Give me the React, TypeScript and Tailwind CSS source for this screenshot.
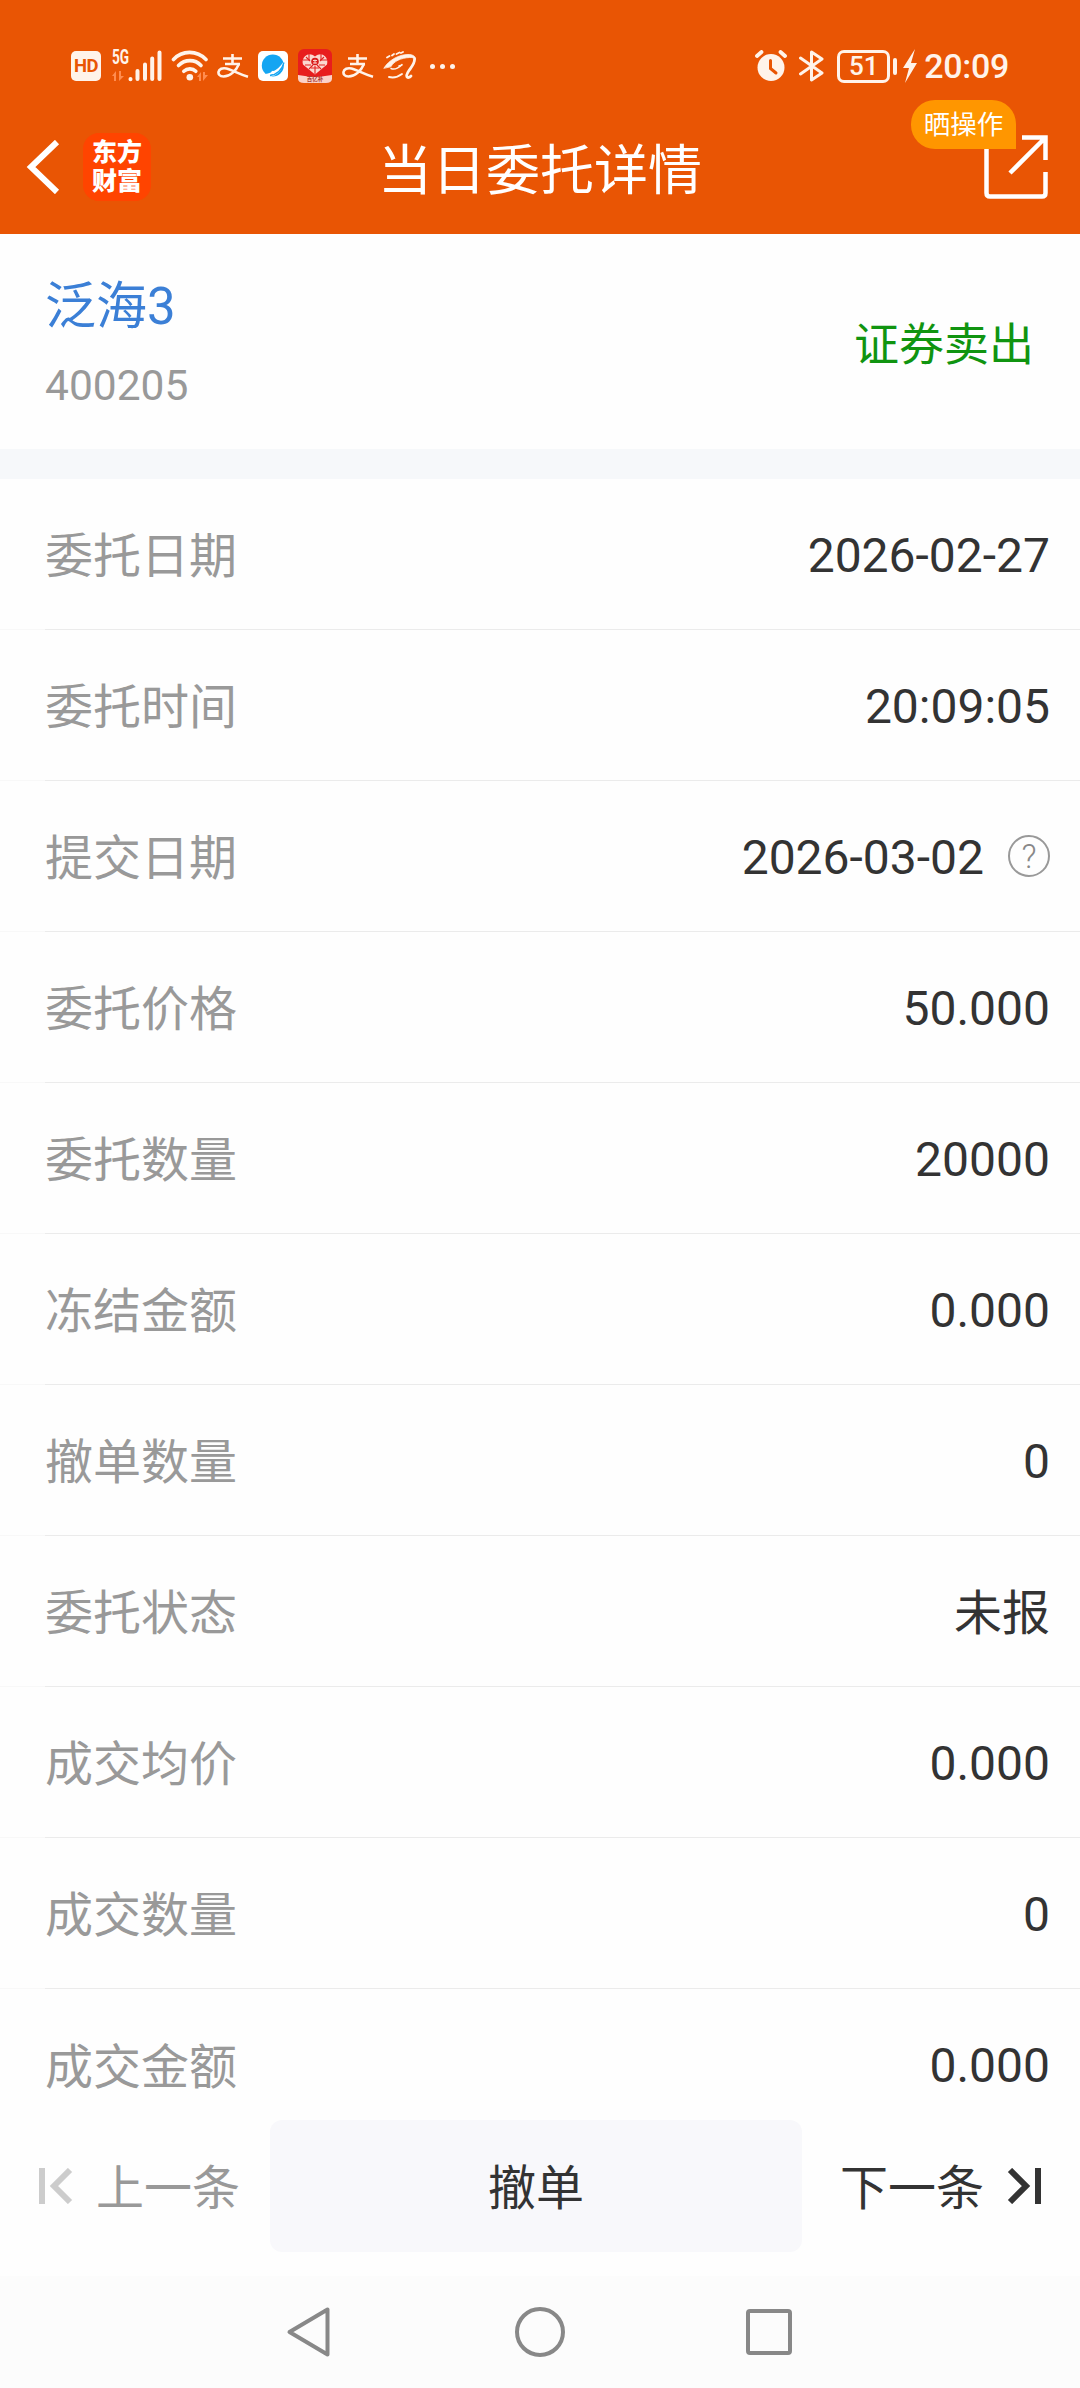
import React from 'react';
import { clsx } from 'clsx';

type Row = { label: string; value: string; help?: boolean };

const ROWS: Row[] = [
  { label: '委托日期', value: '2026-02-27' },
  { label: '委托时间', value: '20:09:05' },
  { label: '提交日期', value: '2026-03-02', help: true },
  { label: '委托价格', value: '50.000' },
  { label: '委托数量', value: '20000' },
  { label: '冻结金额', value: '0.000' },
  { label: '撤单数量', value: '0' },
  { label: '委托状态', value: '未报' },
  { label: '成交均价', value: '0.000' },
  { label: '成交数量', value: '0' },
  { label: '成交金额', value: '0.000' },
];

function AlipayIcon({ className }: { className?: string }) {
  return (
    <svg className={clsx('w-8 h-7 shrink-0', className)} viewBox="0 0 32 28" fill="none" stroke="#fff3ea" strokeWidth="2.6">
      <path d="M15.5 2v10M6 6.500h19M8 12h15" />
      <path d="M22 12c-3 7-9 12.500-15.500 12.500C2.500 24.500 1.200 22 1.500 20 2 17 5.500 15.500 9.500 16.500c6 1.500 12 5.500 21.500 8.200" />
    </svg>
  );
}

function SignalIcon() {
  return (
    <div className="relative w-[51px] h-8 ml-[11px] shrink-0">
      <span className="absolute left-0 top-0 text-[20px] leading-[15px] font-bold origin-left scale-x-[0.68]">5G</span>
      <svg className="absolute inset-0" width="51" height="32" viewBox="0 0 51 32">
        <path d="M0 26l4-5v10H2v-5zM7 21v10l5-5H9v-5z" fill="#ff8d50" />
        <g stroke="#fff3ea" strokeWidth="4" strokeLinecap="round">
          <path d="M18.500 29v0.200M25.500 21v8M33 14.500v14.500M40.200 8.500v20.500M47.500 2.500v26.500" />
        </g>
      </svg>
    </div>
  );
}

function WifiIcon() {
  return (
    <svg className="ml-2 shrink-0" width="38" height="32" viewBox="0 0 38 32" fill="none">
      <g stroke="#fff3ea" strokeWidth="3.600" strokeLinecap="round">
        <path d="M2.500 9.500C11 0 26 0 35 9.500" />
        <path d="M7.500 15.500c6.500-6.500 16.500-6.500 22.500 0" />
        <path d="M12.800 21.300c3.500-3.300 8.800-3.300 12 0" />
      </g>
      <circle cx="18.800" cy="27.300" r="3.300" fill="#fff3ea" />
      <path d="M26 27l4-5v9h-2v-4zM32 22v9l5-6h-3v-3z" fill="#ff8d50" />
    </svg>
  );
}

function BrowserIcon() {
  return (
    <svg className="ml-[9px] shrink-0" width="30" height="30" viewBox="0 0 30 30">
      <rect width="30" height="30" rx="5" fill="#fff" />
      <circle cx="14.800" cy="14.500" r="11" fill="#14a5f2" />
      <path d="M7 23c8-1 15-6 19-13-1 8-6 15-15 16z" fill="#fff" />
      <path d="M12 24.500c7-1 12-6 14-13" stroke="#14a5f2" strokeWidth="1.300" fill="none" />
      <circle cx="15" cy="21.500" r="1.800" fill="#fff" />
    </svg>
  );
}

// red shopping app with the lattice heart
function HeartAppIcon() {
  return (
    <svg className="ml-2.5 shrink-0" width="34" height="34" viewBox="0 0 34 34">
      <rect width="34" height="34" rx="6" fill="#e81d1d" />
      <path d="M17 25.500L5 15.500c-2-7 5-14 12-8 7-6 14 1 12 8z" fill="#fbd8d0" />
      <g stroke="#e32222" strokeWidth="1.100" fill="none">
        <path d="M5 11h7M22 11h7M7 16h6M21 16h6M11 5v6M23 5v6M13 19h8M17 17v8" />
        <path d="M8 8l4 4M26 8l-4 4M11 20l4-4M23 20l-4-4" />
      </g>
      <circle cx="17" cy="12.500" r="3.800" fill="#d91c1c" />
      <path d="M15 11.500h4M15 14h4M17 10.500v4" stroke="#fbd0c8" strokeWidth="1" />
      <path d="M0 26l7 1q10 2 20 0l7-1v4q-.5 4-6 4H6q-5.500 0-6-4z" fill="#fcd2c8" />
      <text x="17" y="32.300" textAnchor="middle" fontSize="5.500" fontWeight="700" fill="#a83a30">百亿补</text>
    </svg>
  );
}

function TaobaoIcon() {
  return (
    <svg className="ml-[9px] shrink-0" width="34" height="30" viewBox="0 0 34 30" fill="none" stroke="#fff3ea" strokeLinecap="round">
      <path d="M1 17C6 9 16 3.500 25 3.500c5 0 8 2 7.500 5-1-1.500-3-2.200-6-2C18 7 11 10 8 15.500z" fill="#fff3ea" strokeWidth="0.800" />
      <path d="M4 6.500l2.500-1.500M9 4.500l2-1.500M13.500 3l3-1.500M18 2l2-1" strokeWidth="1.800" />
      <path d="M31.500 8c.5 4-3 8-5.500 11.500-2 3-3 5-2 6.500.7 1 2.500.5 4-1" strokeWidth="2.800" />
      <path d="M8 17.500c4 2 9-1.500 11-4M16 15l3-1" strokeWidth="1.500" />
      <path d="M6 26c4 1 9 0 13-3" strokeWidth="1.900" />
    </svg>
  );
}

function StatusBar() {
  return (
    <div className="flex items-center h-[132px] pl-[71px] text-[#fff3ea]">
      <div className="w-[30px] h-[30px] shrink-0 rounded-[5px] bg-[#fff3ea] flex items-center justify-center">
        <span className="text-[18.5px] leading-none font-bold text-[#e95504] tracking-tight">HD</span>
      </div>
      <SignalIcon />
      <WifiIcon />
      <AlipayIcon className="ml-2" />
      <BrowserIcon />
      <HeartAppIcon />
      <AlipayIcon className="ml-2.5" />
      <TaobaoIcon />
      <div className="flex gap-[5px] ml-[13px]">
        <i className="w-[5px] h-[5px] rounded-full bg-[#fff3ea]" />
        <i className="w-[5px] h-[5px] rounded-full bg-[#fff3ea]" />
        <i className="w-[5px] h-[5px] rounded-full bg-[#fff3ea]" />
      </div>

      <div className="ml-auto mr-[71px] flex items-center">
        <svg width="32" height="32" viewBox="0 0 32 32" fill="none" stroke="#fff3ea" strokeLinecap="round">
          <circle cx="16" cy="17.500" r="13.500" fill="#fff3ea" stroke="none" />
          <path d="M2 6l4.500-4M30 6l-4.500-4" strokeWidth="3.800" />
          <path d="M15.500 10.500v8l5.500 4.500" stroke="#e95504" strokeWidth="3" />
        </svg>
        <svg className="ml-3" width="25" height="32" viewBox="0 0 25 32" fill="none" stroke="#fff3ea" strokeWidth="3" strokeLinejoin="round" strokeLinecap="round">
          <path d="M1.500 8L23 23 12.500 30V2L23 9 1.500 24" />
        </svg>
        <div className="ml-[13px] w-[53px] h-[33px] border-[3px] border-[#fff3ea] rounded-[7px] flex items-center justify-center text-[26px] leading-none font-medium">
          51
        </div>
        <i className="ml-[3px] w-1 h-[17px] rounded-sm bg-[#fff3ea]" />
        <svg className="ml-1.5" width="14" height="34" viewBox="0 0 14 34" fill="#fff3ea">
          <path d="M12 0L0 19h6L2 34l12-20H8z" />
        </svg>
        <span className="ml-[7px] text-[34px] leading-none font-medium tracking-[-0.3px]">20:09</span>
      </div>
    </div>
  );
}

function Header() {
  return (
    <header className="h-[234px] bg-[#e95504] text-white">
      <StatusBar />
      <div className="relative h-[70px] flex items-center">
        <svg className="ml-[26px]" width="34" height="54" viewBox="0 0 34 54" fill="none" stroke="#fff" strokeWidth="6">
          <path d="M31 2L5 27l26 25" />
        </svg>
        <div className="ml-[23px] w-[68px] h-[68px] rounded-2xl bg-[#ff4400] flex items-center justify-center text-center text-[25px] leading-[29px] font-black">
          东方
          <br />
          财富
        </div>
        <h1 className="absolute inset-x-0 top-[3px] text-center text-[54px] leading-[74px]">当日委托详情</h1>
        <div className="relative ml-auto mr-8 w-[64px] h-[64px]">
          <svg width="64" height="64" viewBox="0 0 64 64" fill="none" stroke="#fff" strokeWidth="4.500">
            <path d="M2.500 4v54q0 3.500 3.500 3.500h52q3.500 0 3.500-3.500V37" />
            <path d="M38 2.500h23.500V25M61 3L26 38" />
          </svg>
          <span className="absolute -left-[73px] -top-[35px] w-[105px] h-[49px] rounded-[24px] rounded-br-none bg-[#ff9600] text-center text-[26.5px] leading-[50px]">
            晒操作
          </span>
        </div>
      </div>
    </header>
  );
}

function DetailRow({ row, last }: { row: Row; last: boolean }) {
  // hanzi sit a little higher than digits in the line box
  const isText = /[\u4e00-\u9fa5]/.test(row.value);

  return (
    <div className="h-[151px] flex">
      <div className={clsx('w-[45px] shrink-0', !last && 'border-b border-[#f8f8f8]')} />
      <div className={clsx('flex-1 pr-[30px] flex items-center justify-between', !last && 'border-b border-[#ebebeb]')}>
        <span className="pt-1.5 text-[#999999]">{row.label}</span>
        <span className="flex items-center text-[#333333]">
          <span className={isText ? 'pt-1.5' : 'pt-[3px]'}>{row.value}</span>
          {row.help && (
            <span className="ml-6 w-[42px] h-[42px] rounded-full border-2 border-[#999999] flex items-center justify-center text-[33px] leading-none font-light text-[#888888]">
              ?
            </span>
          )}
        </span>
      </div>
    </div>
  );
}

export default function App() {
  return (
    <div className="w-[1080px] h-[2388px] overflow-hidden flex flex-col bg-[#fefefe] text-[48px] font-[Roboto,'Noto_Sans_CJK_SC',sans-serif]">
      <Header />

      <section className="h-[215px] pl-[45px] pr-[46px] flex justify-between items-center shrink-0">
        <div className="flex flex-col pt-2.5">
          <span className="text-[51px] leading-[72px] text-[#3b7fd6]">泛海3</span>
          <span className="mt-[7px] text-[42.5px] leading-[72px] text-[#999999]">400205</span>
        </div>
        <span className="pt-2 text-[45px] text-[#109410]">证券卖出</span>
      </section>
      <div className="h-[30px] bg-[#f6f8fa] shrink-0" />

      <main className="h-[1641px] shrink-0 overflow-hidden">
        {ROWS.map((row, i) => (
          <DetailRow key={row.label} row={row} last={i === ROWS.length - 1} />
        ))}
      </main>

      <footer className="h-[156px] flex items-start shrink-0">
        <button className="w-[270px] h-[132px] pl-[39px] flex items-center text-[#999999]">
          <svg width="34" height="36" viewBox="0 0 34 36" fill="none" stroke="#cccccc" strokeWidth="6">
            <path d="M3 0v36M31 2L15 18l16 16" />
          </svg>
          <span className="ml-[23px] pt-1.5">上一条</span>
        </button>
        <button className="w-[532px] h-[132px] pt-1.5 rounded-xl bg-[#f8f8fb] text-[#333333]">撤单</button>
        <button className="flex-1 h-[132px] pl-[38px] flex items-center text-[#333333]">
          <span className="pt-1.5">下一条</span>
          <svg className="ml-[23px]" width="34" height="36" viewBox="0 0 34 36" fill="none" stroke="#333333" strokeWidth="6">
            <path d="M31 0v36M3 2l16 16L3 34" />
          </svg>
        </button>
      </footer>

      <nav className="h-[112px] bg-[#fcfcfc] flex items-center shrink-0 pl-[286px]">
        <svg width="46" height="52" viewBox="0 0 46 52" fill="none" stroke="#888888" strokeWidth="4" strokeLinejoin="round">
          <path d="M41.500 3.500v45L3.500 26z" />
        </svg>
        <i className="ml-[183px] w-[50px] h-[50px] rounded-full border-4 border-[#888888]" />
        <i className="ml-[181px] w-[46px] h-[46px] rounded-[4px] border-4 border-[#888888]" />
      </nav>
    </div>
  );
}
